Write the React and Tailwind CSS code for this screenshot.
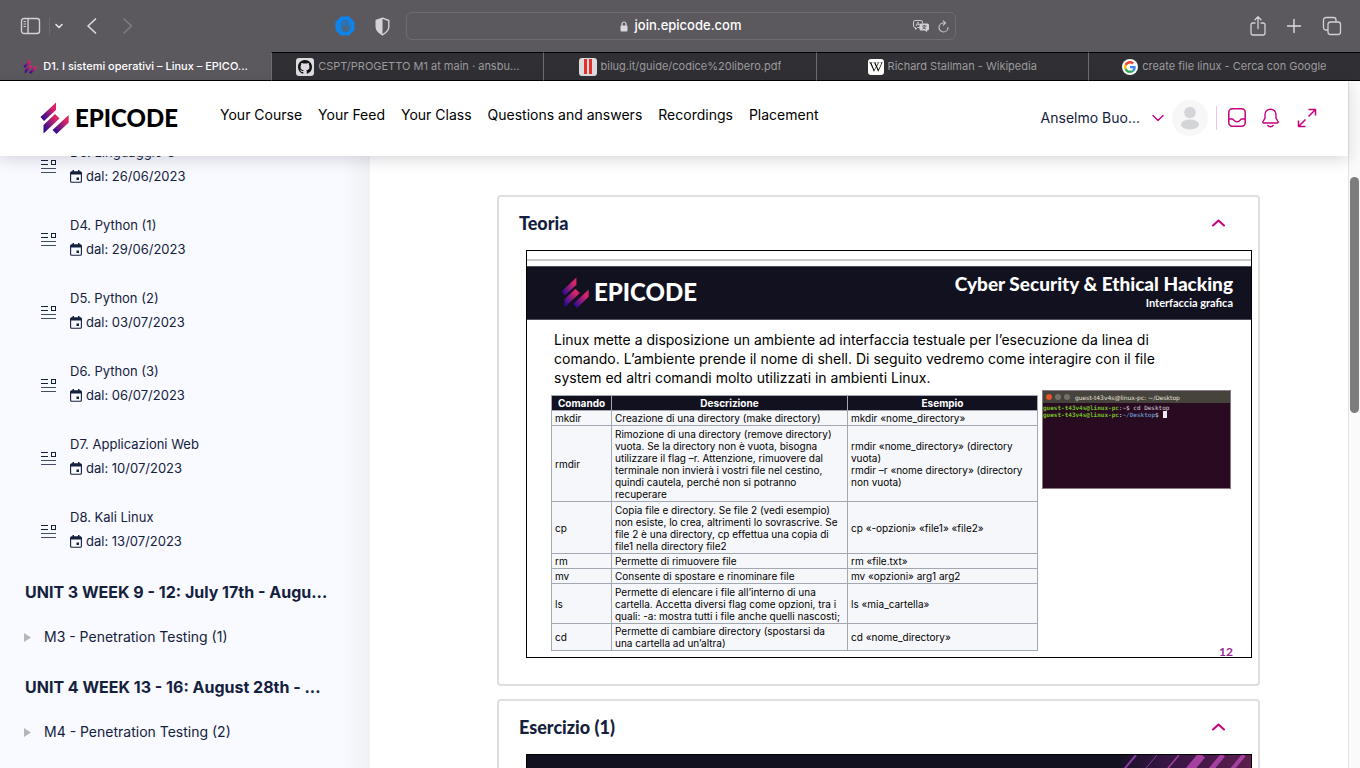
import React from "react";
import { FaWikipediaW } from "react-icons/fa";

const lessons = [
  { title: "D3. Linguaggio C", date: "26/06/2023" },
  { title: "D4. Python (1)", date: "29/06/2023" },
  { title: "D5. Python (2)", date: "03/07/2023" },
  { title: "D6. Python (3)", date: "06/07/2023" },
  { title: "D7. Applicazioni Web", date: "10/07/2023" },
  { title: "D8. Kali Linux", date: "13/07/2023" },
];

const units = [
  { title: "UNIT 3 WEEK 9 - 12: July 17th - Augu...", module: "M3 - Penetration Testing (1)" },
  { title: "UNIT 4 WEEK 13 - 16: August 28th - ...", module: "M4 - Penetration Testing (2)" },
];

const commands = [
  { h: "h-[15px]", name: "mkdir", text: ["Creazione di una directory (make directory)"], example: ["mkdir «nome_directory»"] },
  {
    h: "h-[76px]",
    name: "rmdir",
    text: [
      "Rimozione di una directory (remove directory)",
      "vuota. Se la directory non è vuota, bisogna",
      "utilizzare il flag –r. Attenzione, rimuovere dal",
      "terminale non invierà i vostri file nel cestino,",
      "quindi cautela, perché non si potranno",
      "recuperare",
    ],
    example: ["rmdir «nome_directory» (directory", "vuota)", "rmdir –r «nome directory» (directory", "non vuota)"],
  },
  {
    h: "h-[52px]",
    name: "cp",
    text: [
      "Copia file e directory. Se file 2 (vedi esempio)",
      "non esiste, lo crea, altrimenti lo sovrascrive. Se",
      "file 2 è una directory, cp effettua una copia di",
      "file1 nella directory file2",
    ],
    example: ["cp «-opzioni» «file1» «file2»"],
  },
  { h: "h-[15px]", name: "rm", text: ["Permette di rimuovere file"], example: ["rm «file.txt»"] },
  { h: "h-[15px]", name: "mv", text: ["Consente di spostare e rinominare file"], example: ["mv «opzioni» arg1 arg2"] },
  {
    h: "h-10",
    name: "ls",
    text: [
      "Permette di elencare i file all’interno di una",
      "cartella. Accetta diversi flag come opzioni, tra i",
      "quali: -a: mostra tutti i file anche quelli nascosti;",
    ],
    example: ["ls «mia_cartella»"],
  },
  {
    h: "h-[27px]",
    name: "cd",
    text: ["Permette di cambiare directory (spostarsi da", "una cartella ad un’altra)"],
    example: ["cd «nome_directory»"],
  },
];

function Lines({ lines }) {
  return lines.map((line) => (
    <span key={line} className="block whitespace-nowrap">
      {line}
    </span>
  ));
}

function EpicodeMark({ className, id }) {
  return (
    <svg viewBox="0 0 29 32" className={className} aria-hidden="true">
      <defs>
        <linearGradient id={id} x1="0.1" y1="0.9" x2="0.9" y2="0.2">
          <stop offset="0" stopColor="#2a0a92" />
          <stop offset="0.5" stopColor="#8a1c7c" />
          <stop offset="0.85" stopColor="#d6246a" />
        </linearGradient>
      </defs>
      <g fill={`url(#${id})`}>
        <path d="M0.5 15 16 0.5V8L4 19Z" />
        <path d="M3.5 23 15 12 19.5 16.5 3.5 31.5Z" />
        <path d="M12.5 28 28.7 13V20.5L16.5 32Z" />
      </g>
    </svg>
  );
}

function GithubIcon() {
  return (
    <span className="flex size-[18px] items-center justify-center rounded-[3px] bg-[#dcdcde]">
      <svg viewBox="0 0 16 16" className="size-[14px]" aria-hidden="true">
        <path
          fill="#141416"
          d="M8 0C3.58 0 0 3.58 0 8c0 3.54 2.29 6.53 5.47 7.59.4.07.55-.17.55-.38 0-.19-.01-.82-.01-1.49-2.01.37-2.53-.49-2.69-.94-.09-.23-.48-.94-.82-1.13-.28-.15-.68-.52-.01-.53.63-.01 1.08.58 1.23.82.72 1.21 1.87.87 2.33.66.07-.52.28-.87.51-1.07-1.78-.2-3.64-.89-3.64-3.95 0-.87.31-1.59.82-2.15-.08-.2-.36-1.02.08-2.12 0 0 .67-.21 2.2.82.64-.18 1.32-.27 2-.27s1.36.09 2 .27c1.53-1.04 2.2-.82 2.2-.82.44 1.1.16 1.92.08 2.12.51.56.82 1.27.82 2.15 0 3.07-1.87 3.75-3.65 3.95.29.25.54.73.54 1.48 0 1.07-.01 1.93-.01 2.2 0 .21.15.46.55.38A8.01 8.01 0 0 0 16 8c0-4.42-3.58-8-8-8z"
        />
      </svg>
    </span>
  );
}

function GoogleIcon() {
  return (
    <span className="flex size-4 items-center justify-center rounded-full bg-white">
      <svg viewBox="0 0 48 48" className="size-[12px]" aria-hidden="true">
        <path fill="#EA4335" d="M24 9.5c3.54 0 6.71 1.22 9.21 3.6l6.85-6.85C35.9 2.38 30.47 0 24 0 14.62 0 6.51 5.38 2.56 13.22l7.98 6.19C12.43 13.72 17.74 9.5 24 9.5z" />
        <path fill="#4285F4" d="M46.98 24.55c0-1.57-.15-3.09-.38-4.55H24v9.02h12.94c-.58 2.96-2.26 5.48-4.78 7.18l7.73 6c4.51-4.18 7.09-10.36 7.09-17.65z" />
        <path fill="#FBBC05" d="M10.53 28.59A14.5 14.5 0 0 1 9.77 24c0-1.6.27-3.14.76-4.59l-7.98-6.19A23.9 23.9 0 0 0 0 24c0 3.88.92 7.54 2.56 10.78l7.97-6.19z" />
        <path fill="#34A853" d="M24 48c6.48 0 11.93-2.13 15.89-5.81l-7.73-6c-2.15 1.45-4.92 2.3-8.16 2.3-6.26 0-11.57-4.22-13.47-9.91l-7.98 6.19C6.51 42.62 14.62 48 24 48z" />
      </svg>
    </span>
  );
}

function Tab({ icon, children }) {
  return (
    <a
      href="#"
      className="flex min-w-0 flex-1 items-center justify-center gap-1 border-y border-l border-y-black border-l-[#6d6d70] bg-[#302f33] text-[#9b9a9e]"
    >
      {icon}
      <span className="truncate">{children}</span>
    </a>
  );
}

function BrowserBar() {
  return (
    <div className="shrink-0 bg-[#5b585e]">
      <div className="flex h-13 items-center justify-between pr-[18px] pl-5">
        <div className="flex flex-1 items-center">
          <button aria-label="Sidebar" className="border-r border-[#6b686e] pr-2">
            <svg viewBox="0 0 21 18" className="h-[18px] w-[21px]" fill="none" stroke="#d2d1d5" strokeWidth="1.4">
              <rect x="1.5" y="1.5" width="18" height="15" rx="2.5" />
              <path d="M8 1.5v15" />
              <path d="M3.5 4.5h2.5M3.5 7h2.5M3.5 9.5h2.5" strokeWidth="1" />
            </svg>
          </button>
          <button aria-label="Tab groups" className="ml-1">
            <svg viewBox="0 0 10 10" className="size-[10px]" fill="none" stroke="#e4e3e6" strokeWidth="1.6" strokeLinecap="round" strokeLinejoin="round">
              <path d="M2 3.5 5 6.5 8 3.5" />
            </svg>
          </button>
          <button aria-label="Back" className="ml-[22px]">
            <svg viewBox="0 0 12 18" className="h-[18px] w-3" fill="none" stroke="#dad9dd" strokeWidth="1.7" strokeLinecap="round" strokeLinejoin="round">
              <path d="M9.5 2 2 9l7.5 7" />
            </svg>
          </button>
          <button aria-label="Forward" className="ml-6">
            <svg viewBox="0 0 12 18" className="h-[18px] w-3" fill="none" stroke="#7f7c82" strokeWidth="1.7" strokeLinecap="round" strokeLinejoin="round">
              <path d="M2 2 9.5 9 2 16" />
            </svg>
          </button>
          <div className="mr-4 ml-auto flex items-center gap-5">
            <button aria-label="Ad blocker">
              <svg viewBox="0 0 20 20" className="size-5">
                <path d="M6 .5h8L19.5 6v8L14 19.5H6L.5 14V6Z" fill="#0c84ec" />
                <path d="M7 11V6.2M9.1 11V4.3M11.2 11V4M13.2 11V5.3" stroke="#47688a" strokeWidth="1.3" strokeLinecap="round" fill="none" />
                <path d="M6.3 9.8h7.6v1.7l1.7-2c.7-.5 1.3.1.9.8l-3 4.7c-.7.9-1.5 1.3-2.7 1.3-2.8 0-4.5-1.7-4.5-4.3Z" fill="#47688a" />
              </svg>
            </button>
            <button aria-label="Privacy report">
              <svg viewBox="0 0 15 19" className="h-[19px] w-[15px]">
                <path d="M7.5 1.2 13.8 3.5v6.3c0 3.5-2.6 6-6.3 8-3.7-2-6.3-4.5-6.3-8V3.5Z" fill="none" stroke="#d4d3d7" strokeWidth="1.4" strokeLinejoin="round" />
                <path d="M7.5 1.2v16.6c-3.7-2-6.3-4.5-6.3-8V3.5Z" fill="#d4d3d7" />
              </svg>
            </button>
          </div>
        </div>
        <div className="flex h-7 w-[550px] items-center rounded-md border border-[#6e6b71] px-[6px]">
          <div className="w-9" />
          <div className="flex flex-1 items-center justify-center gap-[7px] text-[13px] font-medium text-white">
            <svg viewBox="0 0 8 11" className="h-[11px] w-2" aria-hidden="true">
              <rect x="0.5" y="4.5" width="7" height="6" rx="1" fill="#d8d7da" />
              <path d="M2 5V3a2 2 0 0 1 4 0v2" fill="none" stroke="#d8d7da" strokeWidth="1.2" />
            </svg>
            join.epicode.com
          </div>
          <button aria-label="Translate">
            <svg viewBox="0 0 18 14" className="h-[14px] w-[18px]">
              <path d="M3 1.5h6A1.5 1.5 0 0 1 10.5 3v1.5M8 8.5H5.5L3.5 10.5V8.5H3A1.5 1.5 0 0 1 1.5 7V3A1.5 1.5 0 0 1 3 1.5" fill="none" stroke="#c9c8cc" />
              <path d="M4 7 6 3l1.5 3M4.7 5.7h2.5" fill="none" stroke="#c9c8cc" strokeWidth=".9" />
              <path d="M9 4.5h6.5A1.5 1.5 0 0 1 17 6v4a1.5 1.5 0 0 1-1.5 1.5H15v1.8l-2-1.8H9A1.5 1.5 0 0 1 7.5 10V6A1.5 1.5 0 0 1 9 4.5Z" fill="#d2d1d5" />
              <path d="M10 7h4.5M12.2 5.8V7M10.5 10c1.5-.5 2.5-1.5 3-3M11 8c.5 1 1.5 1.7 3 2" fill="none" stroke="#5b585e" strokeWidth=".9" />
            </svg>
          </button>
          <button aria-label="Reload" className="ml-2">
            <svg viewBox="0 0 11 13" className="h-[13px] w-[11px]" fill="none" stroke="#c2c1c5" strokeWidth="1.2" strokeLinecap="round">
              <path d="M10 7.5A4.5 4.5 0 1 1 5.5 3H7M5.3.8 7.5 3 5.3 5.2" />
            </svg>
          </button>
        </div>
        <div className="flex flex-1 items-center justify-end gap-5">
          <button aria-label="Share">
            <svg viewBox="0 0 16 20" className="h-5 w-4" fill="none" stroke="#d2d1d5" strokeWidth="1.3" strokeLinecap="round" strokeLinejoin="round">
              <path d="M5 7H3a2 2 0 0 0-2 2v8a2 2 0 0 0 2 2h10a2 2 0 0 0 2-2V9a2 2 0 0 0-2-2h-2M8 12.5V1M5 3.8 8 .8l3 3" />
            </svg>
          </button>
          <button aria-label="New tab">
            <svg viewBox="0 0 16 16" className="size-4" fill="none" stroke="#dddce0" strokeWidth="1.4" strokeLinecap="round">
              <path d="M8 1.5v13M1.5 8h13" />
            </svg>
          </button>
          <button aria-label="Tab overview">
            <svg viewBox="0 0 20 20" className="size-5" fill="none" stroke="#d2d1d5" strokeWidth="1.3" strokeLinejoin="round">
              <rect x="6" y="6" width="12.5" height="12.5" rx="2.5" />
              <path d="M6 14H4a2.5 2.5 0 0 1-2.5-2.5V4A2.5 2.5 0 0 1 4 1.5h7.5A2.5 2.5 0 0 1 14 4v2" />
            </svg>
          </button>
        </div>
      </div>
      <nav aria-label="Browser tabs" className="flex h-[29px] text-[11px]">
        <a href="#" className="flex min-w-0 flex-1 items-center justify-center gap-[6px] border-b border-black font-medium text-white">
          <EpicodeMark id="tabMark" className="h-[15px] w-[14px] shrink-0" />
          <span className="truncate">D1. I sistemi operativi – Linux – EPICO...</span>
        </a>
        <Tab icon={<GithubIcon />}>CSPT/PROGETTO M1 at main · ansbu...</Tab>
        <Tab
          icon={
            <span className="flex size-[18px] items-center justify-center gap-[2px] rounded-[3px] bg-[#dcdcde]">
              <span className="h-[15px] w-[3px] bg-[#e2302c]" />
              <span className="h-[15px] w-[3px] bg-[#e2302c]" />
            </span>
          }
        >
          bilug.it/guide/codice%20libero.pdf
        </Tab>
        <Tab
          icon={
            <span className="flex size-4 items-center justify-center rounded-[3px] bg-white text-black">
              <FaWikipediaW className="size-[14px]" />
            </span>
          }
        >
          Richard Stallman - Wikipedia
        </Tab>
        <Tab icon={<GoogleIcon />}>create file linux - Cerca con Google</Tab>
      </nav>
    </div>
  );
}

function SiteHeader() {
  return (
    <header className="relative z-10 flex h-[75px] shrink-0 items-center bg-white pr-[31px] pb-[2px] pl-10 shadow-[0_4px_14px_rgba(30,30,60,0.16)]">
      <a href="#" className="flex items-center gap-[6px] font-['Lato',sans-serif] text-2xl leading-8 font-black text-black">
        <EpicodeMark id="headerMark" className="h-8 w-[29px]" />
        EPICODE
      </a>
      <nav aria-label="Main" className="ml-[42px] flex gap-4 pb-[5px] text-sm text-black">
        {["Your Course", "Your Feed", "Your Class", "Questions and answers", "Recordings", "Placement"].map((item) => (
          <a key={item} href="#">
            {item}
          </a>
        ))}
      </nav>
      <div className="ml-auto flex items-center text-[#c7007e]">
        <button className="flex items-center gap-3 text-sm text-[#14213d]">
          Anselmo Buo...
          <svg viewBox="0 0 12 8" className="h-2 w-3" fill="none" stroke="#c7007e" strokeWidth="1.4" strokeLinecap="round" strokeLinejoin="round">
            <path d="m1 1.5 5 5 5-5" />
          </svg>
        </button>
        <svg viewBox="0 0 36 36" className="ml-2 size-9" aria-label="Profile">
          <circle cx="18" cy="18" r="18" fill="#f7f7f8" />
          <circle cx="18" cy="12.5" r="5.8" fill="#d4d5d8" />
          <ellipse cx="18" cy="24.5" rx="9" ry="5" fill="#d4d5d8" />
        </svg>
        <span className="ml-2 h-6 w-px bg-[#f1c3de]" />
        <button aria-label="Inbox" className="ml-[11px]">
          <svg viewBox="0 0 18 19" className="h-[19px] w-[18px]" fill="none" stroke="currentColor" strokeWidth="1.5" strokeLinejoin="round">
            <rect x="0.8" y="0.8" width="16.4" height="17.4" rx="3.5" />
            <path d="M1 11h3.5c1 0 1.5 2.8 4.5 2.8s3.5-2.8 4.5-2.8H17" />
          </svg>
        </button>
        <button aria-label="Notifications" className="ml-4">
          <svg viewBox="0 0 17 20" className="h-5 w-[17px]" fill="none" stroke="currentColor" strokeWidth="1.4" strokeLinecap="round" strokeLinejoin="round">
            <path d="M8.5 1.2C5.2 1.2 3 3.7 3 6.8v3.4L1 13.5c-.4.9 0 1.5.9 1.5h13.2c.9 0 1.3-.6.9-1.5l-2-3.3V6.8c0-3.1-2.2-5.6-5.5-5.6Z" />
            <path d="M5.8 17.5c1.4 1.6 4 1.6 5.4 0" />
          </svg>
        </button>
        <button aria-label="Full screen" className="ml-[18px]">
          <svg viewBox="0 0 20 20" className="size-5" fill="none" stroke="currentColor" strokeWidth="1.5" strokeLinejoin="round">
            <path d="M11.5 1.5h7v6M18.5 1.5l-7 7M8.5 18.5h-7v-6M1.5 18.5l7-7" />
          </svg>
        </button>
      </div>
    </header>
  );
}

function LessonIcon() {
  return (
    <svg viewBox="0 0 16 15" className="mt-[5px] h-[15px] w-4 shrink-0" fill="none" stroke="#14213d" aria-hidden="true">
      <path d="M0 1.5h7M0 5.5h7" />
      <rect x="10.5" y="1.5" width="4" height="4" />
      <path d="M0 9.5h15M0 13.5h15" opacity=".8" />
    </svg>
  );
}

function CalendarIcon() {
  return (
    <svg viewBox="0 0 12 13" className="h-[13px] w-3" aria-hidden="true">
      <path d="M1.5 1.5h9a1 1 0 0 1 1 1V4.500h-11V2.500a1 1 0 0 1 1-1ZM2.500 0H4v2H2.500ZM8 0h1.500v2H8Z" fill="#14213d" />
      <rect x="0.6" y="2" width="10.8" height="10.2" rx="1" fill="none" stroke="#14213d" strokeWidth="1.1" />
      <rect x="6.5" y="7.5" width="2.5" height="2.5" fill="#14213d" />
    </svg>
  );
}

function Sidebar() {
  return (
    <aside className="w-[370px] shrink-0 overflow-hidden bg-[#f8faff] bg-linear-to-r from-[#f9faff] from-92% to-[#f0f1f5] text-[#14213d]">
      <ul className="-mt-4 text-[13px] leading-6">
        {lessons.map((lesson) => (
          <li key={lesson.title} className="mb-[25px] flex items-center gap-[13px] pl-[41px]">
            <LessonIcon />
            <a href="#">
              <span className="block">{lesson.title}</span>
              <span className="flex items-center gap-1">
                <CalendarIcon />
                dal: {lesson.date}
              </span>
            </a>
          </li>
        ))}
      </ul>
      <div className="pt-[2px]">
        {units.map((unit) => (
          <section key={unit.title} className="mb-[26px] pl-6">
            <h2 className="pl-px text-base leading-6 font-bold whitespace-nowrap">{unit.title}</h2>
            <button className="mt-[21px] flex items-center gap-[13px] text-sm leading-6">
              <svg viewBox="0 0 7 9" className="h-[9px] w-[7px]" aria-hidden="true">
                <path d="M0 0 7 4.5 0 9Z" fill="#b5b6b9" />
              </svg>
              {unit.module}
            </button>
          </section>
        ))}
      </div>
    </aside>
  );
}

function Section({ title, children }) {
  return (
    <section className="rounded border-2 border-[#dedede] pb-[26px]">
      <button className="flex h-[53px] w-full items-center justify-between pr-[33px] pb-[2px] pl-5 text-left">
        <h2 className="font-['Lato',sans-serif] text-lg font-black text-[#14213d]">{title}</h2>
        <svg viewBox="0 0 13 8" className="h-2 w-[13px]" fill="none" stroke="#c7007e" strokeWidth="2" strokeLinecap="round" strokeLinejoin="round">
          <path d="M1 6.5 6.5 1.5 12 6.5" />
        </svg>
      </button>
      <div className="mr-[6px] ml-[27px] border border-black">{children}</div>
    </section>
  );
}

function CommandTable() {
  const cell = "border border-[#a3a9b2] px-[3px] py-0";
  return (
    <table className="w-[487px] shrink-0 table-fixed border-collapse text-[10px] leading-3 text-black">
      <colgroup>
        <col className="w-[60px]" />
        <col className="w-[236px]" />
        <col />
      </colgroup>
      <thead>
        <tr className="h-[15px] bg-[#12111f] text-white">
          <th className={cell}>Comando</th>
          <th className={cell}>Descrizione</th>
          <th className={cell}>Esempio</th>
        </tr>
      </thead>
      <tbody className="bg-[#f6f7fb]">
        {commands.map((c) => (
          <tr key={c.name} className={c.h}>
            <td className={cell}>{c.name}</td>
            <td className={cell}>
              <Lines lines={c.text} />
            </td>
            <td className={cell}>
              <Lines lines={c.example} />
            </td>
          </tr>
        ))}
      </tbody>
    </table>
  );
}

function Terminal() {
  return (
    <div className="h-[99px] w-[189px] overflow-hidden border border-[#8b7a83] bg-[#280b20] font-['DejaVu_Sans_Mono',monospace] text-[6px] leading-[7px] font-bold whitespace-nowrap">
      <div className="flex h-3 items-center gap-[3px] bg-[#45433c] pl-[3px] font-['DejaVu_Sans',sans-serif] font-normal text-[#e5e1d8]">
        <span className="size-[6px] rounded-full bg-[#e0532c]" />
        <span className="size-[6px] rounded-full bg-[#716f68]" />
        <span className="size-[6px] rounded-full bg-[#716f68]" />
        <span className="pl-[2px]">guest-t43v4s@linux-pc: ~/Desktop</span>
      </div>
      <div className="pt-px text-[#76c229]">
        guest-t43v4s@linux-pc<span className="font-normal text-[#d8cfd5]">:~$ cd Desktop</span>
      </div>
      <div className="flex items-center text-[#76c229]">
        guest-t43v4s@linux-pc<span className="text-[#d8cfd5]">:</span>
        <span className="text-[#5f83b5]">~/Desktop</span>
        <span className="font-normal text-[#d8cfd5]">$</span>
        <span className="ml-1 h-[7px] w-1 bg-[#eeeaee]" />
      </div>
    </div>
  );
}

function TheorySlide() {
  return (
    <div className="bg-white">
      <div className="mt-2 h-[2px] bg-[#cacaca]" />
      <div className="mt-[5px] flex h-[54px] items-center justify-between border-y border-[#50505a] bg-[#12111f] pr-[18px] pb-[2px] pl-[34px] font-['Lato',sans-serif] text-white">
        <div className="flex items-center gap-[5px] text-2xl font-black">
          <EpicodeMark id="slideMark" className="h-[31px] w-7" />
          EPICODE
        </div>
        <div className="text-right">
          <h3 className="text-[19px] leading-[22px] font-black">Cyber Security &amp; Ethical Hacking</h3>
          <p className="text-[11px] leading-4 font-bold">Interfaccia grafica</p>
        </div>
      </div>
      <p className="mt-[10px] pl-[27px] text-sm leading-[19px] whitespace-nowrap text-black">
        Linux mette a disposizione un ambiente ad interfaccia testuale per l’esecuzione da linea di
        <br />
        comando. L’ambiente prende il nome di shell. Di seguito vedremo come interagire con il file
        <br />
        system ed altri comandi molto utilizzati in ambienti Linux.
      </p>
      <div className="relative mt-[3px] flex items-start gap-1 pr-5 pb-[6px] pl-6">
        <div className="pt-[5px]">
          <CommandTable />
        </div>
        <Terminal />
        <span className="absolute right-[18px] bottom-0 font-['Lato',sans-serif] text-xs leading-[11px] font-bold text-[#992a91]">12</span>
      </div>
    </div>
  );
}

function ExerciseSlide() {
  return (
    <div className="flex h-[407px] items-start justify-end bg-[#12111f]">
      <svg viewBox="0 0 140 100" className="h-[100px] w-[140px]" aria-hidden="true">
        <defs>
          <linearGradient id="beams" x1="0" x2="1">
            <stop offset="0" stopColor="#5c1a6c" stopOpacity="0" />
            <stop offset="0.4" stopColor="#5c1a6c" stopOpacity=".5" />
            <stop offset="1" stopColor="#7c2462" stopOpacity=".7" />
          </linearGradient>
        </defs>
        <path d="M10 0H140V60H0Z" fill="url(#beams)" />
        <g stroke="#a540a0">
          <path d="M25 0-25 60" strokeWidth="2" stroke="#8a3aa8" />
          <path d="M46 0-4 60" stroke="#8a3aa8" />
          <path d="M68 0 18 60" strokeWidth="1.5" />
          <path d="M91 0 41 60" strokeWidth="8" />
          <path d="M112 0 62 60" strokeWidth="5" />
          <path d="M133 0 83 60" strokeWidth="4" />
          <path d="M152 0 102 60" strokeWidth="3" />
        </g>
      </svg>
    </div>
  );
}

export default function App() {
  return (
    <div className="flex h-screen flex-col overflow-hidden bg-white font-['Inter',sans-serif]">
      <BrowserBar />
      <div className="flex min-h-0 flex-1">
        <div className="flex min-w-0 flex-1 flex-col">
          <SiteHeader />
          <div className="flex min-h-0 flex-1">
            <Sidebar />
            <main className="flex min-w-0 flex-1 flex-col gap-[13px] overflow-hidden pt-[39px] pr-[88px] pl-[127px]">
              <Section title="Teoria">
                <TheorySlide />
              </Section>
              <Section title="Esercizio (1)">
                <ExerciseSlide />
              </Section>
            </main>
          </div>
        </div>
        <div className="w-3 shrink-0 border-l border-[#e3e3e3] bg-[#fafafa] px-px pt-24">
          <div className="h-[236px] rounded-full bg-[#7d7d7d]" />
        </div>
      </div>
    </div>
  );
}
